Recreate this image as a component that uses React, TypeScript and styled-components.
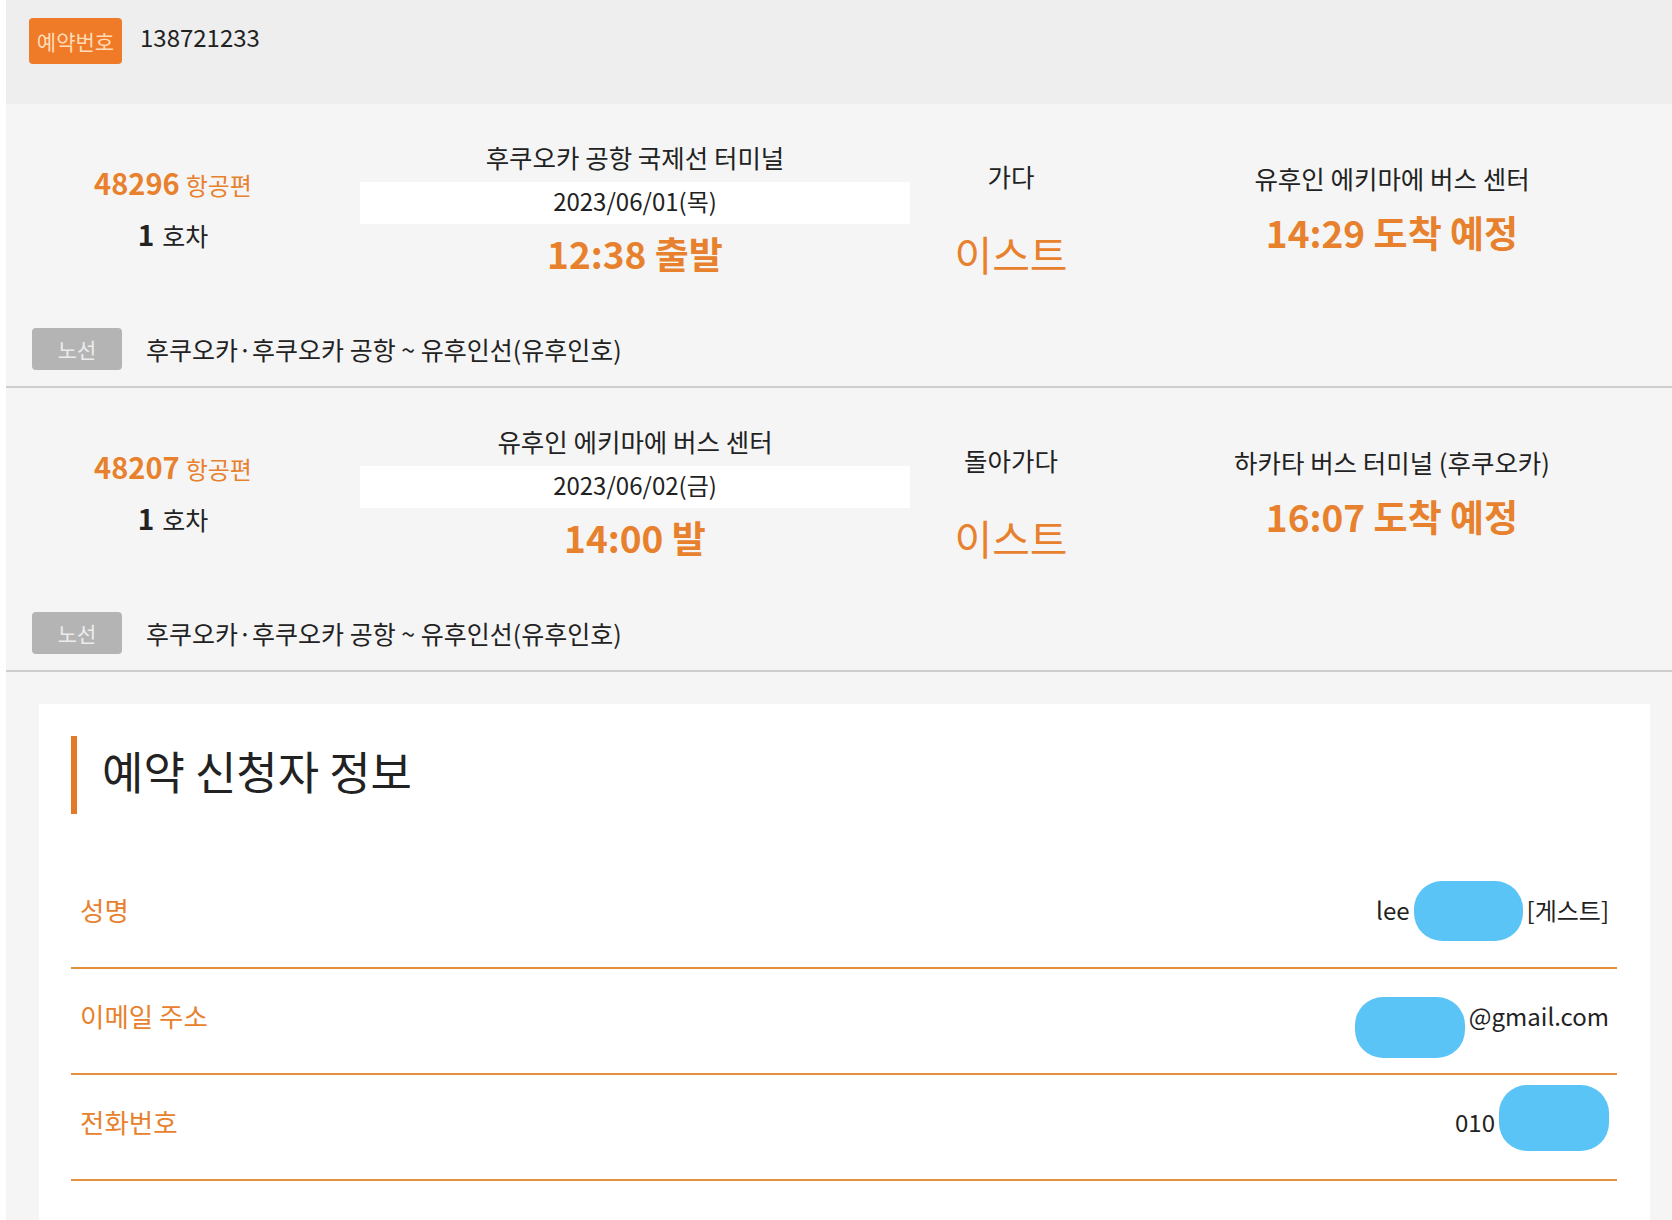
import React from "react";
import styled, { createGlobalStyle } from "styled-components";

const GlobalStyle = createGlobalStyle`
  body {
    margin: 0;
    background: #fff;
    font-family: "Noto Sans CJK KR", "Noto Sans", sans-serif;
    color: #222;
  }
`;

const ORANGE = "#e8812d";

const Page = styled.div`
  padding-left: 6px;
  min-height: 1220px;
  display: flex;
  flex-direction: column;
`;

const Inner = styled.div`
  flex: 1;
  background: #f5f5f5;
  display: flex;
  flex-direction: column;
`;

const Header = styled.div`
  height: 104px;
  box-sizing: border-box;
  background: #eeeeee;
  display: flex;
  align-items: flex-start;
  gap: 18px;
  padding: 18px 0 0 23px;
`;

const OrangeBadge = styled.span`
  width: 93px;
  height: 46px;
  border-radius: 4px;
  background: #ef7a27;
  color: #ffdcb8;
  font-size: 21px;
  display: flex;
  align-items: center;
  justify-content: center;
`;

const ReserveNo = styled.span`
  font-size: 24px;
  line-height: 38px;
  color: #222;
`;

const Trip = styled.section`
  padding: 36px 0 16px;
  border-bottom: 2px solid #cdcdcd;
`;

const TripGrid = styled.div`
  display: grid;
  grid-template-columns: 354px 550px 202px 1fr;
  align-items: start;
`;

const Col = styled.div<{ $top: number }>`
  display: flex;
  flex-direction: column;
  align-items: center;
  padding-top: ${(p) => p.$top}px;
`;

const FlightCol = styled(Col)`
  padding-right: 20px;
`;

const Flight = styled.div`
  color: ${ORANGE};
  font-size: 24px;
  line-height: 36px;
  b {
    font-size: 29px;
    font-weight: 600;
    margin-right: 6px;
  }
`;

const Car = styled.div`
  margin-top: 13px;
  font-size: 25px;
  line-height: 36px;
  color: #222;
  b {
    font-size: 28px;
    margin-right: 8px;
  }
`;

const Station = styled.div<{ $lh: number }>`
  font-size: 25.5px;
  line-height: ${(p) => p.$lh}px;
  color: #222;
  white-space: nowrap;
`;

const DateBox = styled.div`
  margin-top: 8px;
  align-self: stretch;
  height: 42px;
  box-sizing: border-box;
  padding-bottom: 5px;
  background: #fff;
  display: flex;
  align-items: center;
  justify-content: center;
  font-size: 24px;
  color: #222;
`;

const Time = styled.div<{ $mt: number }>`
  margin-top: ${(p) => p.$mt}px;
  font-size: 37px;
  line-height: 50px;
  font-weight: 700;
  color: ${ORANGE};
  white-space: nowrap;
`;

const Company = styled.div`
  margin-top: 33px;
  font-size: 41px;
  line-height: 56px;
  color: ${ORANGE};
`;

const RouteRow = styled.div`
  margin-top: 47px;
  padding-left: 26px;
  display: flex;
  align-items: center;
  gap: 24px;
`;

const GrayBadge = styled.span`
  width: 90px;
  height: 42px;
  border-radius: 4px;
  background: #b4b4b4;
  color: #ececec;
  font-size: 21px;
  display: flex;
  align-items: center;
  justify-content: center;
`;

const RouteText = styled.span`
  font-size: 25px;
  color: #222;
`;

const CardWrap = styled.div`
  flex: 1;
  display: flex;
  padding: 32px 22px 0 33px;
`;

const Card = styled.div`
  flex: 1;
  background: #fff;
  padding: 32px 33px 40px 32px;
`;

const Title = styled.h2`
  margin: 0;
  height: 78px;
  border-left: 6px solid #e27b29;
  padding-left: 25px;
  display: flex;
  align-items: center;
  font-size: 45px;
  font-weight: 400;
  color: #222;
  padding-bottom: 10px;
  box-sizing: border-box;
`;

const Rows = styled.div`
  margin-top: 49px;
`;

const Row = styled.div`
  height: 106px;
  box-sizing: border-box;
  border-bottom: 2px solid #e3913f;
  display: flex;
  align-items: center;
  justify-content: space-between;
  padding: 0 8px 12px 9px;
`;

const Label = styled.span`
  font-size: 26.5px;
  color: ${ORANGE};
`;

const Value = styled.span`
  display: flex;
  align-items: center;
  font-size: 24px;
  color: #222;
`;

// blue masking blob over private info
const Redact = styled.span<{ $w: number; $h: number; $dy?: number; $end?: boolean }>`
  display: inline-block;
  width: ${(p) => p.$w}px;
  height: ${(p) => p.$h}px;
  border-radius: 28px;
  background: #5bc4f7;
  margin: 0 ${(p) => (p.$end ? 0 : 4)}px 0 4px;
  transform: translateY(${(p) => p.$dy || 0}px);
`;

type TripData = {
  flight: string;
  from: string;
  date: string;
  depart: string;
  dir: string;
  to: string;
  arrive: string;
};

const trips: TripData[] = [
  {
    flight: "48296",
    from: "후쿠오카 공항 국제선 터미널",
    date: "2023/06/01(목)",
    depart: "12:38 출발",
    dir: "가다",
    to: "유후인 에키마에 버스 센터",
    arrive: "14:29 도착 예정",
  },
  {
    flight: "48207",
    from: "유후인 에키마에 버스 센터",
    date: "2023/06/02(금)",
    depart: "14:00 발",
    dir: "돌아가다",
    to: "하카타 버스 터미널 (후쿠오카)",
    arrive: "16:07 도착 예정",
  },
];

const TripBlock: React.FC<{ t: TripData }> = ({ t }) => (
  <Trip>
    <TripGrid>
      <FlightCol $top={24}>
        <Flight>
          <b>{t.flight}</b>항공편
        </Flight>
        <Car>
          <b>1</b>호차
        </Car>
      </FlightCol>
      <Col $top={0}>
        <Station $lh={34}>{t.from}</Station>
        <DateBox>{t.date}</DateBox>
        <Time $mt={4}>{t.depart}</Time>
      </Col>
      <Col $top={20}>
        <Station $lh={32}>{t.dir}</Station>
        <Company>이스트</Company>
      </Col>
      <Col $top={22}>
        <Station $lh={32}>{t.to}</Station>
        <Time $mt={13}>{t.arrive}</Time>
      </Col>
    </TripGrid>
    <RouteRow>
      <GrayBadge>노선</GrayBadge>
      <RouteText>후쿠오카·후쿠오카 공항 ~ 유후인선(유후인호)</RouteText>
    </RouteRow>
  </Trip>
);

const App: React.FC = () => {
  return (
    <Page>
      <GlobalStyle />
      <Inner>
        <Header>
          <OrangeBadge>예약번호</OrangeBadge>
          <ReserveNo>138721233</ReserveNo>
        </Header>
        {trips.map((t) => (
          <TripBlock key={t.flight} t={t} />
        ))}
        <CardWrap>
          <Card>
            <Title>예약 신청자 정보</Title>
            <Rows>
              <Row>
                <Label>성명</Label>
                <Value>
                  lee
                  <Redact $w={109} $h={60} $dy={2} />
                  [게스트]
                </Value>
              </Row>
              <Row>
                <Label>이메일 주소</Label>
                <Value>
                  <Redact $w={110} $h={61} $dy={12} />
                  @gmail.com
                </Value>
              </Row>
              <Row>
                <Label>전화번호</Label>
                <Value>
                  010
                  <Redact $w={110} $h={66} $dy={-3} $end />
                </Value>
              </Row>
            </Rows>
          </Card>
        </CardWrap>
      </Inner>
    </Page>
  );
};

export default App;
